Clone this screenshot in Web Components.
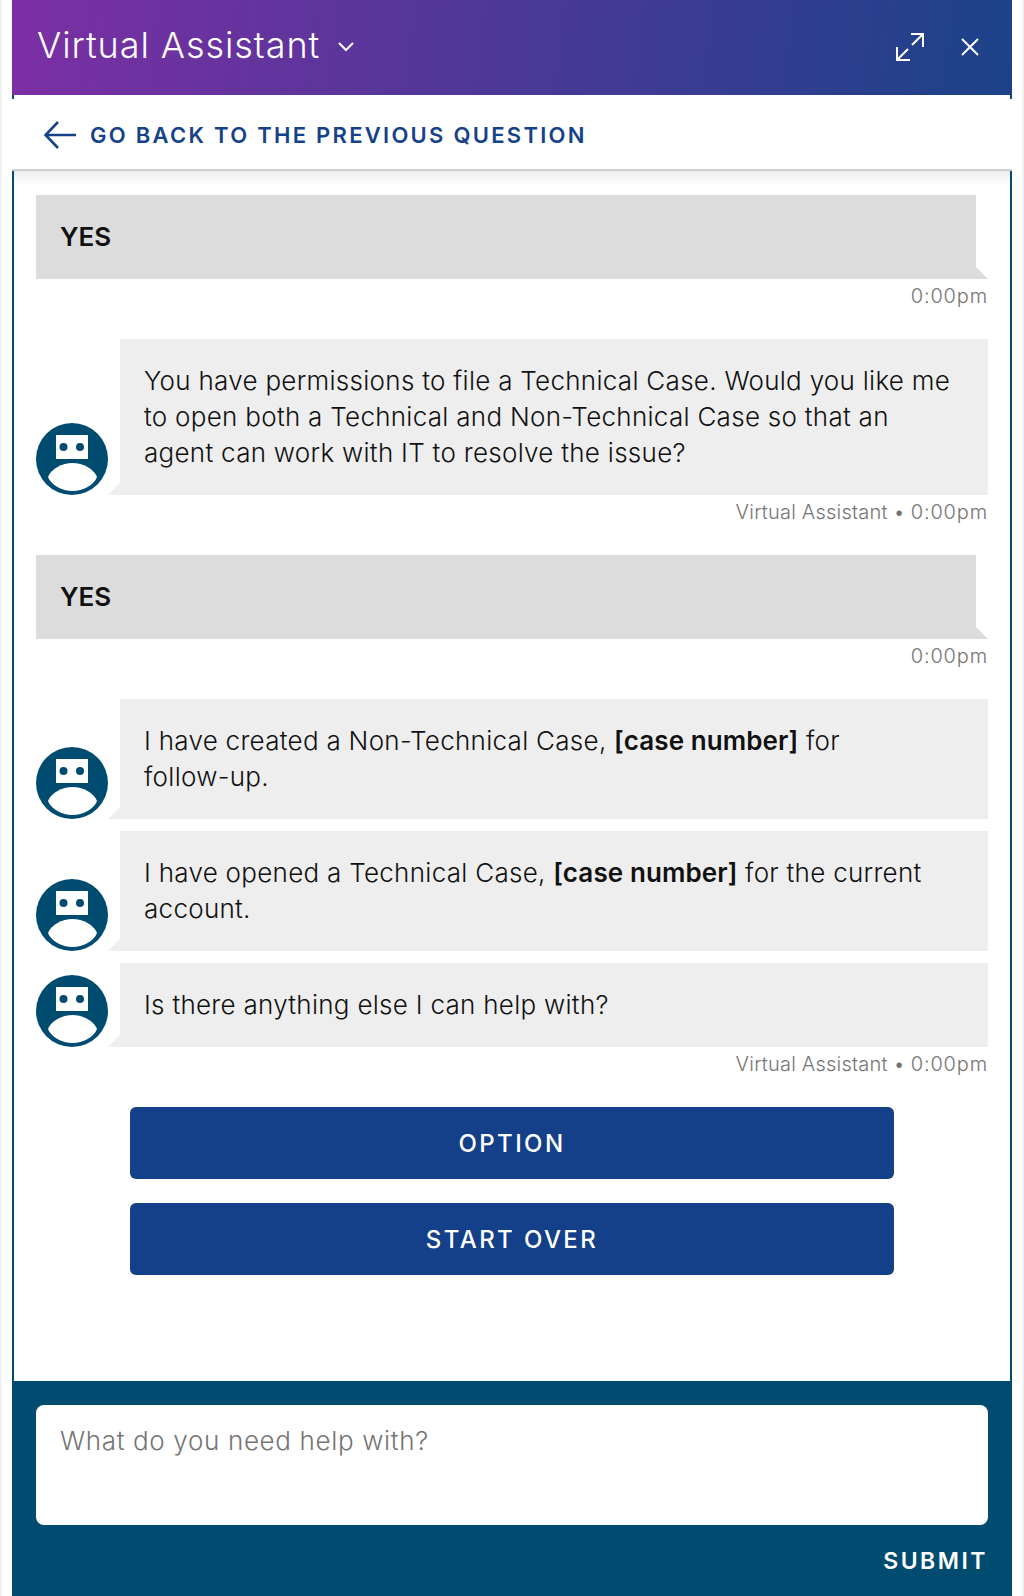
<!DOCTYPE html>
<html><head><meta charset="utf-8"><style>
html{margin:0;padding:0;background:#f1f1f1}
body{margin:0 2px;padding:0;background:#fff;font-family:Inter,"Liberation Sans",sans-serif;color:#1c1c1c;height:1596px;overflow:hidden;}
.nb{white-space:nowrap}
</style></head><body>
<va-panel>
<va-header slot="header">Virtual Assistant</va-header>
<va-back slot="nav">GO BACK TO THE PREVIOUS QUESTION</va-back>
<va-user time="0:00pm">YES</va-user>
<va-bot who="Virtual Assistant •" time="0:00pm">You have permissions to file a Technical Case. Would you like me to open both a Technical and Non-Technical Case so that an agent can work with IT to resolve the issue?</va-bot>
<va-user time="0:00pm">YES</va-user>
<va-bot>I have created a Non-Technical Case, <b>[case number]</b> for <span class="nb">follow-up.</span></va-bot>
<va-bot>I have opened a Technical Case, <b>[case number]</b> for the current <span class="nb">account.</span></va-bot>
<va-bot who="Virtual Assistant •" time="0:00pm">Is there anything else I can help with?</va-bot>
<va-button>OPTION</va-button>
<va-button>START OVER</va-button>
<va-composer slot="footer"></va-composer>
</va-panel>
<script>
function def(name,html){customElements.define(name,class extends HTMLElement{
 constructor(){super();const s=this.attachShadow({mode:'open'});s.innerHTML=html;}
 connectedCallback(){const e=this.shadowRoot.querySelector('.meta');if(!e)return;const t=this.getAttribute('time');if(!t){e.remove();return;}
  const w=this.getAttribute('who');if(w){const a=document.createElement('span');a.textContent=w+' ';e.appendChild(a);}
  const b=document.createElement('span');b.className='tm';b.textContent=t;e.appendChild(b);}
});}
const F='font-family:Inter,"Liberation Sans",sans-serif;';
const META='height:36px;line-height:34px;text-align:right;font-size:20px;font-weight:350;color:#757575;letter-spacing:.2px';
const TM='.tm{letter-spacing:.85px}';
def('va-panel',`<style>
:host{display:flex;flex-direction:column;width:1000px;height:1596px;margin-left:10px;box-sizing:border-box;position:relative}
.body{flex:1;display:flex;flex-direction:column;border:solid #004b70;border-width:0 2px;padding-top:4px;min-height:0}
.nav{margin:0 -2px;position:relative;z-index:1}
.msgs{flex:1;padding:24px 22px 0;display:flex;flex-direction:column}
</style><slot name="header"></slot><div class="body"><div class="nav"><slot name="nav"></slot></div><div class="msgs"><slot></slot></div><slot name="footer"></slot></div>`);
def('va-header',`<style>
:host{display:flex;align-items:center;height:95px;padding:0 33px 2px 25px;box-sizing:border-box;background:linear-gradient(97deg,#7c2fa4,#1b4289);color:#fff;${F}font-size:36px;font-weight:350;letter-spacing:.93px}
svg{display:block;fill:none;stroke:#fff}
.t{flex:none;margin-top:-3px}.sp{flex:1}
.chev{margin:1px 0 0 18px}
.exp{margin-right:37px}
</style><span class="t"><slot></slot></span>
<svg class="chev" width="16" height="10" viewBox="0 0 16 10" stroke-width="2"><path d="M1 1l7 7 7-7"/></svg><span class="sp"></span>
<svg class="exp" width="28" height="28" viewBox="0 0 28 28" stroke-width="2"><path d="M15 1h12v13M27 1L16 12M1 14v13h13M1 27l11-11"/></svg>
<svg width="18" height="18" viewBox="0 0 18 18" stroke-width="2"><path d="M1 1l16 16M17 1L1 17"/></svg>`);
def('va-back',`<style>
:host{display:flex;align-items:center;position:relative;height:72px;box-sizing:border-box;padding:0 0 0 32px;background:#fff;border-bottom:2px solid #cfcfcf;color:#154289;${F}font-size:22px;font-weight:600;letter-spacing:2.28px}
:host::after{content:"";position:absolute;left:2px;right:2px;top:100%;margin-top:2px;height:14px;background:linear-gradient(rgba(0,0,0,.07),rgba(0,0,0,0))}
svg{display:block;fill:none;stroke:#154289;margin:1px 14px 0 0}
span{margin-top:1px}
</style><svg width="32" height="28" viewBox="0 0 32 28" stroke-width="2.6"><path d="M32 14H2M14 1L1.500 14 14 27"/></svg><span><slot></slot></span>`);
def('va-user',`<style>
:host{display:block;${F}margin-bottom:24px}
.b{position:relative;background:#dcdcdc;height:84px;margin-right:12px;display:flex;align-items:center;padding:0 0 2px 24px;box-sizing:border-box;font-size:26px;font-weight:600;color:#111}
.b::after{content:"";position:absolute;left:100%;bottom:0;border-style:solid;border-width:12px 0 0 12px;border-color:transparent transparent transparent #dcdcdc;}
.meta{${META}}${TM}
</style><div class="b"><slot></slot></div><div class="meta"></div>`);
def('va-bot',`<style>
:host{display:block;${F}margin-bottom:12px}
.r{display:flex;align-items:flex-end}
svg{display:block;flex:none;margin-right:12px}
.b{position:relative;flex:1;background:#eee;padding:24px;font-size:26px;line-height:36px;font-weight:350;color:#111;letter-spacing:.28px}
.b::after{content:"";position:absolute;right:100%;bottom:0;border-style:solid;border-width:0 0 12px 12px;border-color:transparent transparent #eee transparent}
::slotted(b){font-weight:600;color:#111;letter-spacing:.1px}
.meta{${META};margin-bottom:12px}${TM}
</style><div class="r"><svg width="72" height="72" viewBox="0 0 72 72"><circle cx="36" cy="36" r="36" fill="#004b70"/><rect x="20" y="12" width="32" height="24" fill="#fff"/><circle cx="27.500" cy="24" r="4" fill="#004b70"/><circle cx="44" cy="24" r="4" fill="#004b70"/><path d="M12 54C15 46 26 40 36.500 40C47 40 58 46 61 54C58 62 47 68 36.500 68C26 68 15 62 12 54Z" fill="#fff"/></svg><div class="b"><slot></slot></div></div><div class="meta"></div>`);
def('va-button',`<style>
:host{display:flex;align-items:center;justify-content:center;height:72px;margin:0 94px 24px 94px;background:#134089;border-radius:6px;color:#fff;${F}font-size:24px;font-weight:500;letter-spacing:2.4px}
</style><slot></slot>`);
def('va-composer',`<style>
:host{display:block;margin:0 -2px;height:215px;box-sizing:border-box;padding:24px 24px 0;background:#004b70;${F}}
.i{height:120px;background:#fff;border-radius:8px;box-sizing:border-box;padding:18px 24px;font-size:26px;font-weight:350;line-height:36px;color:#757575;letter-spacing:.65px}
.s{color:#fff;text-align:right;font-size:23px;font-weight:600;letter-spacing:2.5px;margin-top:24px;line-height:24px}
</style><div class="i">What do you need help with?</div><div class="s">SUBMIT</div>`);
</script></body></html>
